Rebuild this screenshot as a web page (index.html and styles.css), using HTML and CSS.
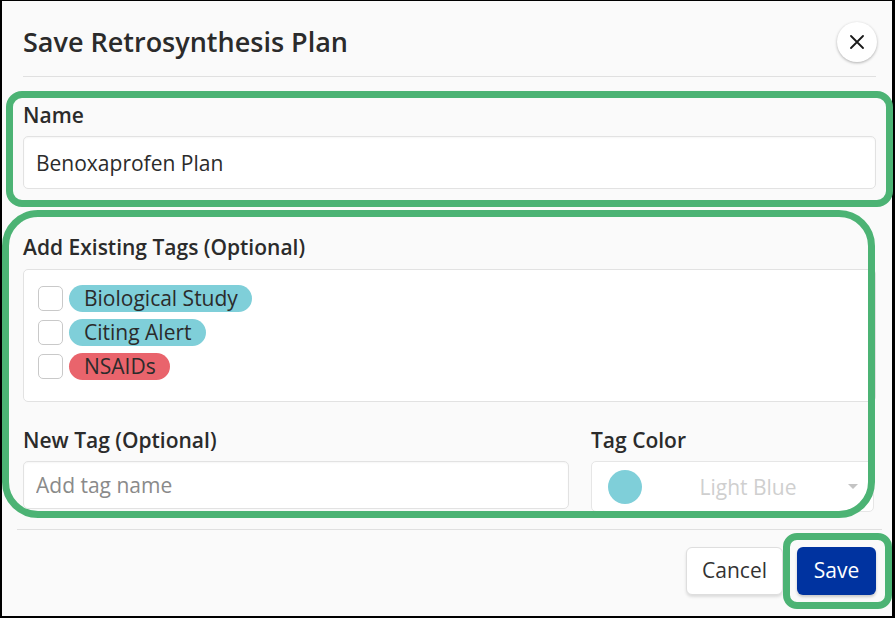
FILE: index.html
```html
<!DOCTYPE html>
<html lang="en">
<head>
    <meta charset="UTF-8">
    <meta name="viewport" content="width=device-width, initial-scale=1.0">
    <title>Save Retrosynthesis Plan</title>
    <link rel="stylesheet" href="styles.css">
</head>
<body>

    <div class="frame">
        <div class="header">
            <h1>Save Retrosynthesis Plan</h1>
            <button class="close" aria-label="Close">
                <svg width="14" height="14" viewBox="0 0 14 14">
                    <path d="M1 1 L13 13 M13 1 L1 13" stroke="#1a1a1a" stroke-width="1.8" stroke-linecap="round"/>
                </svg>
            </button>
        </div>

        <div class="field name-field">
            <label>Name</label>
            <input type="text" class="text-input name-input" value="Benoxaprofen Plan">
        </div>

        <div class="field tags-field">
            <label>Add Existing Tags (Optional)</label>
            <div class="tag-box">
                <div class="tag-row"><span class="check"></span><span class="tag blue">Biological Study</span></div>
                <div class="tag-row"><span class="check"></span><span class="tag blue">Citing Alert</span></div>
                <div class="tag-row"><span class="check"></span><span class="tag red">NSAIDs</span></div>
            </div>
        </div>

        <div class="new-tag">
            <div class="field">
                <label>New Tag (Optional)</label>
                <input type="text" class="text-input tag-input" placeholder="Add tag name">
            </div>
            <div class="field">
                <label>Tag Color</label>
                <div class="color-select">
                    <span class="swatch"></span>
                    <span class="color-name">Light Blue</span>
                    <span class="caret"></span>
                </div>
            </div>
        </div>

        <div class="footer">
            <button class="btn cancel">Cancel</button>
            <button class="btn save">Save</button>
        </div>

        <!-- highlight marks -->
        <div class="mark mark-name"></div>
        <div class="mark mark-tags"></div>
        <div class="mark mark-save"></div>
    </div>

</body>
</html>
```

FILE: styles.css
```css
* {
    box-sizing: border-box;
}
body {
    margin: 0;
    font-family: "Open Sans", "Noto Sans", sans-serif;
    color: #2b2b2b;
}
.frame {
    position: relative;
    width: 895px;
    height: 618px;
    border-style: solid;
    border-color: #000;
    border-width: 1px 3px 2px 2px;
    background: #fafafa;
    padding: 0 16px 0 21px;
}
.header {
    display: flex;
    align-items: center;
    justify-content: space-between;
    padding: 21px 0 14px;
    border-bottom: 1px solid #e0e0e0;
}
h1 {
    margin: 0;
    font-size: 27px;
    font-weight: 600;
    line-height: 40px;
    color: #2b2b2b;
}
.close {
    width: 40px;
    height: 40px;
    margin-right: -1px;
    border: none;
    border-radius: 50%;
    background: #fff;
    box-shadow: 0 1px 3px rgba(0, 0, 0, 0.3);
    display: flex;
    align-items: center;
    justify-content: center;
    padding: 0;
}
label {
    display: block;
    font-size: 21px;
    font-weight: 600;
    line-height: 28px;
}
.name-field {
    margin-top: 24px;
}
.name-field label {
    margin-bottom: 7px;
}
.text-input {
    display: block;
    width: 100%;
    font-family: "Open Sans", "Noto Sans", sans-serif;
    font-size: 21px;
    color: #2b2b2b;
    background: #fff;
    border: 1px solid #e2e2e2;
    border-radius: 5px;
    padding: 0 12px;
    box-shadow: inset 0 1px 2px rgba(0, 0, 0, 0.04);
    outline: none;
}
.text-input::placeholder {
    color: #8a8a8a;
}
.name-input {
    height: 53px;
}
.tags-field {
    margin-top: 44px;
}
.tags-field label {
    margin-bottom: 8px;
}
.tag-box {
    height: 133px;
    background: #fff;
    border: 1px solid #e2e2e2;
    border-radius: 5px;
    padding: 15px 14px;
    display: flex;
    flex-direction: column;
    gap: 7px;
}
.tag-row {
    display: flex;
    align-items: center;
    gap: 6px;
}
.check {
    width: 25px;
    height: 25px;
    background: #fff;
    border: 1px solid #c9c9c9;
    border-radius: 5px;
}
.tag {
    height: 27px;
    line-height: 27px;
    padding: 0 14px 0 15px;
    border-radius: 14px;
    font-size: 21px;
    color: #2b2b2b;
}
.blue {
    background: #7fcfd9;
}
.red {
    background: #e9646c;
}
.new-tag {
    display: grid;
    grid-template-columns: 546px 283px;
    gap: 22px;
    margin-top: 24px;
}
.new-tag label {
    margin-bottom: 7px;
}
.tag-input {
    height: 48px;
}
.color-select {
    position: relative;
    height: 51px;
    background: #fff;
    border: 1px solid #e6e6e6;
    border-radius: 5px;
    display: flex;
    align-items: center;
    padding: 0 16px;
}
.swatch {
    width: 34px;
    height: 34px;
    border-radius: 50%;
    background: #7fcfd9;
}
.color-name {
    flex: 1;
    text-align: center;
    font-size: 21px;
    color: #cfcfcf;
    padding-left: 6px;
}
.caret {
    width: 0;
    height: 0;
    border-left: 5px solid transparent;
    border-right: 5px solid transparent;
    border-top: 5px solid #c4c4c4;
    margin-right: -1px;
}
.footer {
    display: flex;
    justify-content: flex-end;
    gap: 14px;
    margin: 17px -6px 0 -6px;
    padding: 17px 6px 0 0;
    border-top: 1px solid #e0e0e0;
}
.btn {
    height: 48px;
    font-family: "Open Sans", "Noto Sans", sans-serif;
    font-size: 21px;
    border-radius: 6px;
    padding: 0 15px 3px;
}
.cancel {
    background: #fff;
    color: #333;
    border: 1px solid #dedede;
    box-shadow: 0 2px 3px rgba(0, 0, 0, 0.12);
}
.save {
    background: #0033a0;
    color: #fff;
    border: none;
    width: 79px;
    box-shadow: 0 2px 3px rgba(0, 0, 0, 0.2);
}
.mark {
    position: absolute;
    border: 7px solid #4cb374;
}
.mark-name {
    left: 4px;
    top: 90px;
    width: 887px;
    height: 116px;
    border-radius: 16px;
}
.mark-tags {
    left: 0;
    top: 209px;
    width: 873px;
    height: 308px;
    border-radius: 36px;
}
.mark-save {
    left: 781px;
    top: 532px;
    width: 109px;
    height: 76px;
    border-radius: 14px;
}
```
